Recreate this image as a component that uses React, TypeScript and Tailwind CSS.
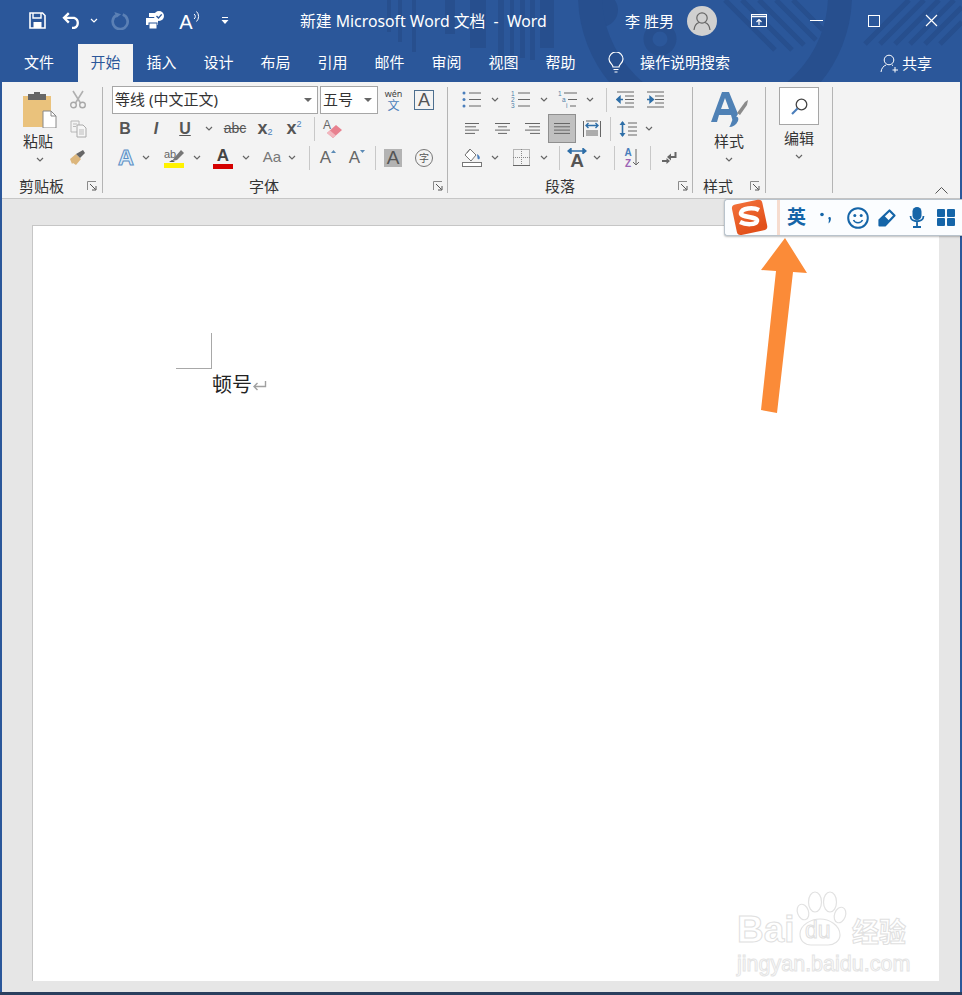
import React from "react";

const Cell = ({ className = "", children }: { className?: string; children?: React.ReactNode }) => (
  <div className={"flex items-center justify-center shrink-0 h-full " + className}>{children}</div>
);

const Chev = ({ c = "#666" }: { c?: string }) => (
  <svg width="8" height="5" viewBox="0 0 8 5" fill="none"><path d="M1 1l3 3 3-3" stroke={c} strokeWidth="1.2" /></svg>
);

const VSep = ({ h = "h-[24px]" }: { h?: string }) => <div className={"w-px bg-[#c8c8c8] " + h} />;
const GroupSep = () => <div className="w-px h-[106px] mt-[5px] bg-[#b4b4b4] shrink-0" />;

const Launcher = ({ className = "" }: { className?: string }) => (
  <svg className={"shrink-0 " + className} width="10" height="10" viewBox="0 0 10 10" fill="none">
    <path d="M0.5 9V0.5H9" stroke="#8a8a8a" />
    <path d="M3 3l5.5 5.5M9 5v4H5" stroke="#555" />
  </svg>
);

const Lines = ({ rows, w = 14 }: { rows: [number, number][]; w?: number }) => (
  <svg width={w} height="14" viewBox={`0 0 ${w} 14`} fill="none">
    {rows.map(([a, b], i) => (
      <path key={i} d={`M${a} ${1.5 + i * 3.3}H${b}`} stroke="#666" />
    ))}
  </svg>
);

const Label = ({ className = "", children }: { className?: string; children: React.ReactNode }) => (
  <span className={"text-[15px] leading-[20px] text-[#333] whitespace-nowrap shrink-0 " + className}>{children}</span>
);

const Pattern = () => (
  <svg className="absolute left-0 top-0" width="962" height="82" viewBox="0 0 962 82" fill="none">
    <g fill="#274f8e">
      <rect x="387" y="0" width="4" height="32" />
      <rect x="398" y="0" width="4" height="42" />
      <rect x="412" y="0" width="4" height="52" />
      <rect x="445" y="0" width="10" height="34" />
      <rect x="470" y="0" width="16" height="48" />
      <rect x="498" y="0" width="6" height="60" />
      <rect x="510" y="0" width="4" height="55" />
      <rect x="520" y="0" width="5" height="58" />
      <rect x="530" y="0" width="5" height="60" />
      <rect x="540" y="0" width="14" height="48" />
      <circle cx="601" cy="10" r="17" />
    </g>
    <circle cx="660" cy="39" r="12" stroke="#274f8e" strokeWidth="9" />
    <circle cx="715" cy="-5" r="125" stroke="#274f8e" strokeWidth="24" />
    <g stroke="#274f8e" strokeWidth="5">
      <path d="M725 0l50 50M742 0l50 50M759 0l45 45M776 0l40 40M793 0l30 30" />
      <path d="M865 44L909 0M880 44L924 0M895 44L939 0M910 44L954 0M925 44L962 7M940 44L962 22" />
    </g>
  </svg>
);

const TitleBar = () => (
  <div className="relative z-10 flex h-[41px] items-center text-white pl-[22px]">
    <Cell className="w-[30px]">
      <svg width="17" height="17" viewBox="0 0 17 17" fill="none">
        <path d="M1 1h12.5L16 3.5V16H1z" stroke="#fff" strokeWidth="1.6" />
        <path d="M4 1v5h8V1" stroke="#fff" strokeWidth="1.4" />
        <rect x="4.5" y="10" width="8" height="6" fill="#fff" />
      </svg>
    </Cell>
    <Cell className="w-[30px] ml-[5px]">
      <svg width="20" height="17" viewBox="0 0 18 16" fill="none">
        <path d="M6 1L1.5 5.5 6 10" stroke="#fff" strokeWidth="2.2" />
        <path d="M2 5.5h9a5 5 0 0 1 0 9.5H9" stroke="#fff" strokeWidth="2.2" />
      </svg>
    </Cell>
    <Cell className="w-[14px]"><Chev c="#fff" /></Cell>
    <Cell className="w-[30px] ml-[4px]">
      <svg width="19" height="19" viewBox="0 0 17 17" fill="none">
        <path d="M10.5 3.2a6.7 6.7 0 1 1-6 .7" stroke="#5b80b5" strokeWidth="2.4" />
        <path d="M3 1l2 5 4-3z" fill="#5b80b5" />
      </svg>
    </Cell>
    <Cell className="w-[30px] ml-[5px]">
      <svg width="20" height="20" viewBox="0 0 20 20" fill="none">
        <path d="M4 6V2h7v4M1 7h12v7H1z" fill="#fff" />
        <rect x="4" y="12" width="8" height="6" fill="#fff" stroke="#2b579a" />
        <circle cx="14" cy="5" r="5" fill="#fff" />
        <path d="M11.5 5l2 2 3.2-3.6" stroke="#2b579a" strokeWidth="1.4" />
      </svg>
    </Cell>
    <Cell className="w-[30px] ml-[5px]">
      <span className="relative text-[20px] [font-family:'Liberation_Sans',sans-serif] leading-none mt-[3px]">A</span>
      <svg width="8" height="14" viewBox="0 0 8 14" fill="none" className="-mt-[8px]">
        <path d="M1 4a3 3 0 0 1 0 5M3.5 1.5a7 7 0 0 1 0 10" stroke="#fff" />
      </svg>
    </Cell>
    <Cell className="w-[30px] ml-[5px]">
      <svg width="8" height="9" viewBox="0 0 8 9" fill="none">
        <path d="M1 1.5h6" stroke="#fff" /><path d="M0.5 4h7L4 8z" fill="#fff" />
      </svg>
    </Cell>
    <div className="ml-[60px] w-[247px] text-[15.8px] leading-[20px] whitespace-nowrap shrink-0">新建 Microsoft Word 文档&nbsp; -&nbsp; Word</div>
    <div className="ml-[78px] w-[50px] text-[15px] leading-[20px] whitespace-nowrap shrink-0">李 胜男</div>
    <div className="ml-[12px] w-[30px] h-[30px] rounded-full bg-[#d0d0d0] flex items-center justify-center shrink-0">
      <svg width="20" height="20" viewBox="0 0 20 20" fill="none">
        <circle cx="10" cy="7" r="5.2" stroke="#666" strokeWidth="1.2" />
        <path d="M2 19c.5-5 3.500-7 5-7.500M18 19c-.5-5-3.500-7-5-7.500" stroke="#666" strokeWidth="1.2" />
      </svg>
    </div>
    <Cell className="w-[30px] ml-[27px]">
      <svg width="16" height="13" viewBox="0 0 16 13" fill="none">
        <rect x="0.5" y="0.500" width="15" height="12" stroke="#fff" />
        <path d="M0.500 2.500h15" stroke="#fff" strokeWidth="1.500" />
        <path d="M8 11V6M5.500 8L8 5.500 10.500 8" stroke="#fff" strokeWidth="1.200" />
      </svg>
    </Cell>
    <Cell className="w-[30px] ml-[27px]"><div className="w-[13px] h-px bg-white" /></Cell>
    <Cell className="w-[30px] ml-[28px]"><div className="w-[12px] h-[12px] border border-white" /></Cell>
    <Cell className="w-[30px] ml-[27px]">
      <svg width="13" height="13" viewBox="0 0 13 13" fill="none"><path d="M1 1l11 11M12 1L1 12" stroke="#fff" strokeWidth="1.200" /></svg>
    </Cell>
  </div>
);

const tabs = ["插入", "设计", "布局", "引用", "邮件", "审阅", "视图", "帮助"];

const TabBar = () => (
  <div className="relative z-10 flex h-[41px] items-end text-white text-[15px]">
    <div className="w-[78px] h-[38px] pb-[2px] flex items-center justify-center shrink-0">文件</div>
    <div className="w-[55px] h-[38px] pb-[1px] flex items-center justify-center bg-[#f3f3f3] text-[#2b579a] shrink-0">开始</div>
    {tabs.map((t) => (
      <div key={t} className="w-[57px] h-[38px] pb-[1px] flex items-center justify-center shrink-0">{t}</div>
    ))}
    <div className="h-[38px] flex items-center ml-[19px] shrink-0">
      <svg width="16" height="22" viewBox="0 0 16 22" fill="none">
        <path d="M5 15c0-2.500-4-4-4-8a7 7 0 0 1 14 0c0 4-4 5.500-4 8z" stroke="#fff" strokeWidth="1.200" />
        <path d="M5.500 17.500h5M6.500 20h3" stroke="#fff" strokeWidth="1.200" />
      </svg>
    </div>
    <div className="h-[38px] pb-[1px] flex items-center ml-[16px] w-[90px] whitespace-nowrap shrink-0">操作说明搜索</div>
    <div className="h-[38px] flex items-center ml-[150px] shrink-0">
      <svg width="19" height="19" viewBox="0 0 19 19" fill="none">
        <circle cx="9" cy="6" r="4.800" stroke="#fff" />
        <path d="M1 18c.5-4 2.500-6 5-7M12 11l1 .5M15 13v5.500M12.500 16h5.500" stroke="#fff" />
      </svg>
    </div>
    <div className="h-[38px] flex items-center ml-[3px] whitespace-nowrap shrink-0">共享</div>
  </div>
);

const Clipboard = () => (
  <div className="w-[100px] h-full flex flex-col shrink-0">
    <div className="h-[94px] flex">
      <div className="ml-[10px] w-[56px] flex flex-col items-center pt-[10px]">
        <svg width="34" height="36" viewBox="0 0 34 36" fill="none">
          <rect x="0" y="4" width="28" height="31" fill="#eac27c" />
          <rect x="5" y="2" width="18" height="6" fill="#666" />
          <rect x="11" y="0" width="6" height="4" fill="#666" />
          <path d="M20 19h8l5 5v12H20z" fill="#fff" stroke="#888" />
          <path d="M28 19v5h5" stroke="#888" />
        </svg>
        <Label className="mt-[3px] -ml-[4px]">粘贴</Label>
        <div className="mt-[6px]"><Chev /></div>
      </div>
      <div className="w-[20px] flex flex-col pt-[3px]">
        <div className="h-[29px] flex items-center justify-center">
          <svg width="16" height="19" viewBox="0 0 16 19" fill="none">
            <path d="M3 1l7.500 12M13 1L5.500 13" stroke="#b0b0b0" strokeWidth="1.600" />
            <circle cx="3.500" cy="15" r="2.800" stroke="#a8a8a8" strokeWidth="1.400" />
            <circle cx="12.500" cy="15" r="2.800" stroke="#a8a8a8" strokeWidth="1.400" />
          </svg>
        </div>
        <div className="h-[29px] flex items-center justify-center">
          <svg width="17" height="18" viewBox="0 0 17 18" fill="none">
            <path d="M1 1h8v11H1z" stroke="#b8b8b8" fill="#f3f3f3" />
            <path d="M7 5h6l3 3v9H7z" stroke="#aaa" fill="#f6f6f6" />
            <path d="M3 4h4M3 6.500h3M9 10h5M9 12h5M9 14h5" stroke="#bbb" />
          </svg>
        </div>
        <div className="h-[29px] flex items-center justify-center">
          <svg width="18" height="17" viewBox="0 0 18 17" fill="none">
            <path d="M1 10l6-5 5 5-5 6-3-2-1 1z" fill="#dcb67c" />
            <path d="M7 5l4 4 5-5-2-3z" fill="#666" />
          </svg>
        </div>
      </div>
    </div>
    <div className="flex items-center h-[20px]">
      <Label className="ml-[17px]">剪贴板</Label>
      <Launcher className="ml-[23px]" />
    </div>
  </div>
);

const A = ({ className = "" }: { className?: string }) => (
  <span className={"[font-family:'Liberation_Sans',sans-serif] leading-none " + className}>A</span>
);

const Font = () => (
  <div className="w-[344px] h-full flex flex-col shrink-0">
    <div className="h-[94px] pl-[9px] pt-[4px] flex flex-col">
      <div className="flex h-[28px] items-center">
        <div className="w-[206px] h-[28px] bg-white border border-[#a6a6a6] flex items-center justify-between pl-[2px] pr-[5px] text-[15px] text-[#333] shrink-0">
          <span className="whitespace-nowrap -mt-[2px]">等线 (中文正文)</span>
          <svg width="8" height="4" viewBox="0 0 8 4"><path d="M0 0h8L4 4z" fill="#666" /></svg>
        </div>
        <div className="ml-[2px] w-[58px] h-[28px] bg-white border border-[#a6a6a6] flex items-center justify-between pl-[2px] pr-[5px] text-[15px] text-[#333] shrink-0">
          <span className="whitespace-nowrap -mt-[2px]">五号</span>
          <svg width="8" height="4" viewBox="0 0 8 4"><path d="M0 0h8L4 4z" fill="#666" /></svg>
        </div>
        <div className="ml-[7px] w-[17px] flex flex-col items-center shrink-0 text-center">
          <span className="text-[9px] leading-[10px] text-[#444] whitespace-nowrap">wén</span>
          <span className="text-[12px] leading-[13px] text-[#4a7ebb]">文</span>
        </div>
        <div className="ml-[12px] w-[20px] h-[20px] border border-[#4d6f8f] flex items-center justify-center shrink-0">
          <A className="text-[18px] text-[#555]" />
        </div>
      </div>
      <div className="flex h-[29px] items-center text-[#555] [font-family:'Liberation_Sans',sans-serif]">
        <Cell className="w-[26px] -ml-[9px] pl-[9px] box-content"><b className="text-[16px]">B</b></Cell>
        <Cell className="w-[36px]"><b className="text-[16px] italic">I</b></Cell>
        <Cell className="w-[22px]"><b className="text-[16px] underline">U</b></Cell>
        <Cell className="w-[26px]"><Chev /></Cell>
        <Cell className="w-[26px]"><span className="text-[14px] line-through">abc</span></Cell>
        <Cell className="w-[34px]"><b className="text-[18px]">x</b><span className="text-[9px] text-[#4a7ebb] mt-[8px]">2</span></Cell>
        <Cell className="w-[24px]"><b className="text-[18px]">x</b><span className="text-[9px] text-[#4a7ebb] -mt-[8px]">2</span></Cell>
        <Cell className="w-[16px]"><VSep /></Cell>
        <Cell className="w-[22px]">
          <svg width="22" height="22" viewBox="0 0 22 22" fill="none">
            <text x="1" y="11" fontSize="12" fill="#666" fontFamily="Liberation Sans">A</text>
            <path d="M5 15l9-8 6 5-9 8z" fill="#e8818f" />
            <path d="M5 15l3-2.600 6 5L11 20z" fill="#f2b6be" />
          </svg>
        </Cell>
      </div>
      <div className="flex h-[29px] items-center text-[#555]">
        <Cell className="w-[28px]">
          <A className="text-[22px] font-bold text-[#dcecf8] [-webkit-text-stroke:1px_#5b8fc5]" />
        </Cell>
        <Cell className="w-[12px]"><Chev /></Cell>
        <Cell className="w-[36px] ml-[4px]">
          <svg width="22" height="20" viewBox="0 0 22 20" fill="none">
            <rect x="1" y="15" width="20" height="5" fill="#fff200" />
            <text x="1" y="10" fontSize="11" fill="#666" fontFamily="Liberation Sans">ab</text>
            <path d="M9 13l3-4 6-7 3 3-7 7z" fill="#777" />
            <path d="M6 14l3-2 3 2z" fill="#555" />
          </svg>
        </Cell>
        <Cell className="w-[10px]"><Chev /></Cell>
        <Cell className="w-[30px] ml-[6px] flex-col">
          <A className="text-[17px] font-bold text-[#444]" />
          <div className="w-[20px] h-[5px] bg-[#d40000]" />
        </Cell>
        <Cell className="w-[16px]"><Chev /></Cell>
        <Cell className="w-[24px] ml-[6px]"><span className="[font-family:'Liberation_Sans',sans-serif] text-[15px] text-[#777]">Aa</span></Cell>
        <Cell className="w-[16px]"><Chev /></Cell>
        <Cell className="w-[18px]"><VSep /></Cell>
        <Cell className="w-[20px]">
          <A className="text-[17px] text-[#666]" />
          <svg width="5" height="3" viewBox="0 0 5 3" className="-mt-[12px]"><path d="M0 3l2.500-3L5 3z" fill="#5b8ab5" /></svg>
        </Cell>
        <Cell className="w-[30px] ml-[4px]">
          <A className="text-[17px] text-[#666]" />
          <svg width="5" height="3" viewBox="0 0 5 3" className="-mt-[12px]"><path d="M0 0l2.500 3L5 0z" fill="#5b8ab5" /></svg>
        </Cell>
        <Cell className="w-[6px]"><VSep /></Cell>
        <Cell className="w-[30px]">
          <div className="w-[18px] h-[18px] bg-[#b3b3b3] flex items-center justify-center"><A className="text-[19px] text-[#555]" /></div>
        </Cell>
        <Cell className="w-[32px]">
          <div className="w-[18px] h-[18px] rounded-full border border-[#777] flex items-center justify-center text-[10px] leading-none text-[#555]">字</div>
        </Cell>
      </div>
    </div>
    <div className="flex items-center h-[20px]">
      <Label className="ml-[146px]">字体</Label>
      <Launcher className="ml-[154px]" />
    </div>
  </div>
);

const Bullets = ({ kind }: { kind: "dot" | "num" | "multi" }) => (
  <svg width="20" height="17" viewBox="0 0 20 17" fill="none">
    {kind === "dot" && (
      <>
        <circle cx="2" cy="2" r="1.500" fill="#4a7ebb" /><circle cx="2" cy="8.500" r="1.500" fill="#4a7ebb" /><circle cx="2" cy="15" r="1.500" fill="#4a7ebb" />
        <path d="M7 2h12M7 8.500h12M7 15h12" stroke="#666" />
      </>
    )}
    {kind === "num" && (
      <>
        <g fontSize="6.500" fill="#4f7fa8" fontFamily="Liberation Sans">
          <text x="0" y="5">1</text><text x="0" y="11">2</text><text x="0" y="17">3</text>
        </g>
        <path d="M7 2h12M7 8.500h12M7 15h12" stroke="#666" />
      </>
    )}
    {kind === "multi" && (
      <>
        <g fontSize="6.500" fill="#4f7fa8" fontFamily="Liberation Sans">
          <text x="0" y="5">1</text><text x="4" y="11">a</text><text x="8" y="17">i</text>
        </g>
        <path d="M6 2h13M10 8.500h9M12 15h6" stroke="#666" />
      </>
    )}
  </svg>
);

const Indent = ({ right }: { right?: boolean }) => (
  <svg width="19" height="17" viewBox="0 0 19 17" fill="none">
    <path d="M1 1h17M1 16h17M9 5h9M9 8.500h9M9 12h9" stroke="#666" />
    {right ? <path d="M1 8.500h5M4 5.500l3.500 3-3.500 3z" stroke="#2f6fa8" strokeWidth="1.400" fill="#2f6fa8" /> : <path d="M7 8.500H2M4 5.500L.8 8.500l3.200 3z" stroke="#2f6fa8" strokeWidth="1.400" fill="#2f6fa8" />}
  </svg>
);

const Paragraph = () => (
  <div className="w-[244px] h-full flex flex-col shrink-0">
    <div className="h-[94px] pt-[3px] flex flex-col">
      <div className="flex h-[29px] items-center">
        <Cell className="w-[26px] ml-[11px]"><Bullets kind="dot" /></Cell>
        <Cell className="w-[20px]"><Chev /></Cell>
        <Cell className="w-[26px] ml-[3px]"><Bullets kind="num" /></Cell>
        <Cell className="w-[20px]"><Chev /></Cell>
        <Cell className="w-[26px] ml-[1px]"><Bullets kind="multi" /></Cell>
        <Cell className="w-[18px]"><Chev /></Cell>
        <Cell className="w-[14px]"><VSep /></Cell>
        <Cell className="w-[24px]"><Indent /></Cell>
        <Cell className="w-[24px] ml-[6px]"><Indent right /></Cell>
      </div>
      <div className="flex h-[29px] items-center">
        <Cell className="w-[26px] ml-[11px]"><Lines rows={[[0, 14], [0, 11], [0, 14], [0, 10]]} w={15} /></Cell>
        <Cell className="w-[26px] ml-[4px]"><Lines rows={[[0, 15], [3, 12], [0, 15], [3, 12]]} w={15} /></Cell>
        <Cell className="w-[26px] ml-[4px]"><Lines rows={[[0, 15], [4, 15], [0, 15], [5, 15]]} w={15} /></Cell>
        <Cell className="w-[28px] ml-[3px] bg-[#c0c0c0] border border-[#8f8f8f]"><Lines rows={[[0, 16], [0, 16], [0, 16], [0, 16]]} w={16} /></Cell>
        <Cell className="w-[26px] ml-[3px]">
          <svg width="18" height="18" viewBox="0 0 18 18" fill="none">
            <path d="M0.500 1v16M17.500 1v16M3 13h12M3 15h12M3 11h12M3 1h12" stroke="#666" />
            <path d="M3 5.500h12M5.500 3L3 5.500 5.500 8M12.500 3L15 5.500 12.500 8" stroke="#2f6fa8" strokeWidth="1.400" />
          </svg>
        </Cell>
        <Cell className="w-[10px]"><VSep /></Cell>
        <Cell className="w-[26px]">
          <svg width="18" height="18" viewBox="0 0 18 18" fill="none">
            <path d="M3.500 2v14" stroke="#2f6fa8" strokeWidth="1.600" />
            <path d="M0.500 5l3-4 3 4zM0.500 13l3 4 3-4z" fill="#2f6fa8" />
            <path d="M9 3h9M9 7h9M9 11h9M9 15h9" stroke="#666" />
          </svg>
        </Cell>
        <Cell className="w-[16px]"><Chev /></Cell>
      </div>
      <div className="flex h-[29px] items-center">
        <Cell className="w-[26px] ml-[11px]">
          <svg width="20" height="19" viewBox="0 0 20 19" fill="none">
            <path d="M8 1l6 6-5 6-6-6z" stroke="#777" fill="#fff" />
            <path d="M8 1L5 5" stroke="#777" />
            <path d="M15 6c2 1 3.500 3 2.500 5-1 .8-2 0-2-1z" fill="#4a7ebb" />
            <rect x="0.500" y="14.500" width="19" height="4" stroke="#777" fill="#fff" />
          </svg>
        </Cell>
        <Cell className="w-[20px]"><Chev /></Cell>
        <Cell className="w-[26px] ml-[3px]">
          <svg width="17" height="17" viewBox="0 0 17 17" fill="none">
            <rect x="0.500" y="0.500" width="16" height="16" stroke="#777" strokeDasharray="1 1" />
            <path d="M8.500 0v17M0 8.500h17" stroke="#888" strokeDasharray="1 1" />
            <path d="M0 16.500h17" stroke="#666" />
          </svg>
        </Cell>
        <Cell className="w-[20px]"><Chev /></Cell>
        <Cell className="w-[10px]"><VSep /></Cell>
        <Cell className="w-[26px]">
          <div className="relative flex flex-col items-center">
            <svg width="20" height="6" viewBox="0 0 20 6" fill="none"><path d="M1 3h18M4 0.500L1 3l3 2.500zM16 0.500L19 3l-3 2.500z" stroke="#2f6fa8" strokeWidth="1.400" fill="#2f6fa8" /></svg>
            <A className="text-[19px] !leading-[14px] font-bold text-[#555]" />
          </div>
        </Cell>
        <Cell className="w-[14px]"><Chev /></Cell>
        <Cell className="w-[20px]"><VSep /></Cell>
        <Cell className="w-[16px]">
          <div className="flex flex-col items-center [font-family:'Liberation_Sans',sans-serif] text-[10px] font-bold leading-[11px]">
            <span className="text-[#4a7ebb]">A</span>
            <span className="text-[#9c64b5]">Z</span>
          </div>
          <svg width="8" height="17" viewBox="0 0 8 17" fill="none"><path d="M4 0v16M1 13l3 3 3-3" stroke="#666" /></svg>
        </Cell>
        <Cell className="w-[20px]"><VSep /></Cell>
        <Cell className="w-[18px]">
          <svg width="16" height="14" viewBox="0 0 16 14" fill="none">
            <path d="M14.500 1v5H9" stroke="#666" strokeWidth="2" />
            <path d="M10 2.500L6 6l4 3.500z" fill="#666" />
            <path d="M1 10h5" stroke="#666" strokeWidth="2" />
            <path d="M5.500 7L9 10l-3.500 3z" fill="#666" />
          </svg>
        </Cell>
      </div>
    </div>
    <div className="flex items-center h-[20px]">
      <Label className="ml-[97px]">段落</Label>
      <Launcher className="ml-[103px]" />
    </div>
  </div>
);

const Styles = () => (
  <div className="w-[72px] h-full flex flex-col shrink-0">
    <div className="h-[94px] flex flex-col items-center pt-[10px]">
      <div className="relative w-[37px] h-[36px] flex">
        <svg width="37" height="36" viewBox="0 0 37 36" fill="none">
          <path d="M0 30L11 0h7l9 22-5 8-2-7H8l-2 7z" fill="#4f81b5" />
          <path d="M10 17h8l-4-11z" fill="#f3f3f3" />
          <path d="M26 21l8-11 3-2-1 5-7 10z" fill="#8a8a8a" />
          <path d="M18 35c2-1 2-7 6-10 3-1 4 1 3 4-2 4-5 6-9 6z" fill="#4f81b5" />
        </svg>
      </div>
      <Label className="mt-[3px]">样式</Label>
      <div className="mt-[6px]"><Chev /></div>
    </div>
    <div className="flex items-center h-[20px]">
      <Label className="ml-[10px]">样式</Label>
      <Launcher className="ml-[17px]" />
    </div>
  </div>
);

const Editing = () => (
  <div className="w-[66px] h-full flex flex-col items-center shrink-0">
    <div className="mt-[5px] w-[40px] h-[38px] bg-white border border-[#a6a6a6] flex items-center justify-center">
      <svg width="17" height="17" viewBox="0 0 17 17" fill="none">
        <circle cx="10.500" cy="6.500" r="5.300" stroke="#444" strokeWidth="1.300" />
        <path d="M6.500 10.500L1 16" stroke="#4a7ebb" strokeWidth="2.200" />
      </svg>
    </div>
    <Label className="mt-[3px]">编辑</Label>
    <div className="mt-[6px]"><Chev /></div>
  </div>
);

const Ribbon = () => (
  <div className="flex h-[116px] bg-[#f3f3f3] border-b border-[#c6c6c6] box-content">
    <Clipboard />
    <GroupSep />
    <Font />
    <GroupSep />
    <Paragraph />
    <GroupSep />
    <Styles />
    <GroupSep />
    <Editing />
    <GroupSep />
    <div className="flex-1 flex items-end justify-end pb-[4px] pr-[12px]">
      <svg width="13" height="7" viewBox="0 0 13 7" fill="none"><path d="M0.500 6.500l6-6 6 6" stroke="#555" /></svg>
    </div>
  </div>
);

const Sogou = () => (
  <div className="absolute left-[724px] top-[199px] w-[238px] h-[37px] bg-[#fbfdff] rounded-l-[3px] border border-[#b9c3cc] border-r-0 shadow-[0_1px_2px_rgba(0,0,0,0.25)] flex items-center z-20">
    <svg width="42" height="40" viewBox="0 0 42 40" className="ml-[4px] shrink-0 -mt-[1px]" fill="none">
      <defs>
        <linearGradient id="sg" x1="0" y1="0" x2="0.300" y2="1">
          <stop offset="0" stopColor="#f2703a" /><stop offset="1" stopColor="#e2501a" />
        </linearGradient>
      </defs>
      <rect x="5" y="5" width="31" height="31" rx="4" transform="rotate(-12 20 20)" fill="url(#sg)" />
      <path d="M30 13c-6-3-17-2-18 3-1 5 17 3 16 8-1 4-11 4-17 1" stroke="#fff" strokeWidth="4.500" />
    </svg>
    <div className="w-[3px] h-[35px] bg-[#f6dccf] ml-[6px] shrink-0" />
    <div className="ml-[7px] text-[19px] leading-none font-bold text-[#1565a8] w-[20px] shrink-0">英</div>
    <svg width="14" height="14" viewBox="0 0 14 14" className="ml-[12px] shrink-0" fill="none">
      <circle cx="3" cy="3.500" r="1.800" fill="#1565a8" />
      <path d="M10.500 6c1.500 0 2 2 .5 5l-1.500 1.500 .5-4c-1-.5-.8-2.500 .5-2.500z" fill="#1565a8" />
    </svg>
    <svg width="22" height="22" viewBox="0 0 22 22" className="ml-[14px] shrink-0" fill="none">
      <circle cx="11" cy="11" r="9.800" stroke="#1565a8" strokeWidth="2" />
      <circle cx="7.800" cy="8.500" r="1.500" fill="#1565a8" /><circle cx="14.200" cy="8.500" r="1.500" fill="#1565a8" />
      <path d="M6.500 13c1.500 3.500 7.500 3.500 9 0" stroke="#1565a8" strokeWidth="1.500" />
    </svg>
    <svg width="20" height="20" viewBox="0 0 20 20" className="ml-[8px] shrink-0" fill="none">
      <path d="M12.500 2.500l5 5L8 17.500H2.500V12z" stroke="#1565a8" strokeWidth="2.200" strokeLinejoin="round" />
      <path d="M2.500 12L7 7.500l5.500 5.500-4.500 4.500H2.500z" fill="#1565a8" />
    </svg>
    <svg width="16" height="21" viewBox="0 0 16 21" className="ml-[12px] shrink-0" fill="none">
      <rect x="3.500" y="0" width="9" height="13" rx="4.500" fill="#1565a8" />
      <path d="M1.500 9c0 7 13 7 13 0M8 15v4M4 20h8" stroke="#1565a8" strokeWidth="1.800" />
    </svg>
    <div className="ml-[12px] grid grid-cols-2 gap-[1.500px] w-[18px] shrink-0">
      <div className="h-[8px] bg-[#1565a8] rounded-[1px]" /><div className="h-[8px] bg-[#1565a8] rounded-[1px]" />
      <div className="h-[8px] bg-[#1565a8] rounded-[1px]" /><div className="h-[8px] bg-[#1565a8] rounded-[1px]" />
    </div>
  </div>
);

const Arrow = () => (
  <svg className="absolute left-[755px] top-[236px] z-30" width="60" height="180" viewBox="0 0 60 180" fill="none">
    <path d="M30 2L52 37 38 36 22 177 6 174 21 35 6 34z" fill="#fb8b38" />
  </svg>
);

const Watermark = () => (
  <div className="absolute left-[737px] top-[890px] w-[176px] h-[90px] z-10">
    <svg className="absolute left-[56px] top-0" width="62" height="58" viewBox="0 0 62 58" fill="none" stroke="#e2e2e2" strokeWidth="1.200">
      <ellipse cx="10" cy="22" rx="5.500" ry="8" transform="rotate(-20 10 22)" />
      <ellipse cx="22" cy="12" rx="6.500" ry="10" />
      <ellipse cx="37" cy="12" rx="6.500" ry="10" />
      <ellipse cx="47" cy="25" rx="5.500" ry="8" transform="rotate(20 47 25)" />
      <path d="M7 44c0-9 11-15 20-15s20 6 20 16c0 6-6 10-12 10H18c-6 0-11-4-11-11z" />
    </svg>
    <span className="absolute left-0 top-[22px] text-[37px] leading-[36px] font-bold text-white [-webkit-text-stroke:1px_#e0e0e0] [font-family:'Liberation_Sans',sans-serif]">Bai</span>
    <span className="absolute left-[68px] top-[28px] text-[23px] leading-[24px] text-white [-webkit-text-stroke:1px_#e0e0e0] [font-family:'Liberation_Sans',sans-serif]">du</span>
    <span className="absolute left-[115px] top-[27px] text-[27px] leading-[30px] font-bold text-white [-webkit-text-stroke:1px_#e0e0e0] whitespace-nowrap">经验</span>
    <span className="absolute left-0 top-[62px] text-[21.500px] leading-[24px] text-white [-webkit-text-stroke:1px_#e4e4e4] whitespace-nowrap [font-family:'Liberation_Sans',sans-serif]">jingyan.baidu.com</span>
  </div>
);

const DocArea = () => (
  <div className="flex-1 bg-[#e6e6e6] pl-[30px] pt-[26px] pb-[10px]">
    <div className="w-[907px] h-[756px] bg-white border-l border-t border-[#c6c6c6] pl-[143px] pt-[107px]">
      <div className="w-[36px] h-[36px] border-r border-b border-[#a8a8a8]" />
      <div className="flex items-center ml-[36px] h-[32px]">
        <span className="text-[20px] leading-[32px] text-[#222]">顿号</span>
        <svg width="15" height="11" viewBox="0 0 15 11" fill="none" className="mt-[2px]">
          <path d="M13.500 0v5.500H2M5.500 2L2 5.500 5.500 9" stroke="#a0a0a0" strokeWidth="1.400" />
        </svg>
      </div>
    </div>
  </div>
);

export default function App() {
  return (
    <div className="relative w-[962px] h-[995px] overflow-hidden bg-[#2b579a] flex flex-col [font-family:'Noto_Sans','Noto_Sans_CJK_SC',sans-serif]">
      <div className="relative h-[82px] shrink-0">
        <Pattern />
        <TitleBar />
        <TabBar />
      </div>
      <div className="flex-1 flex flex-col mx-[2px]">
        <Ribbon />
        <DocArea />
      </div>
      <div className="h-[3px] bg-[#2a3f5e] shrink-0" />
      <Sogou />
      <Arrow />
      <Watermark />
    </div>
  );
}
